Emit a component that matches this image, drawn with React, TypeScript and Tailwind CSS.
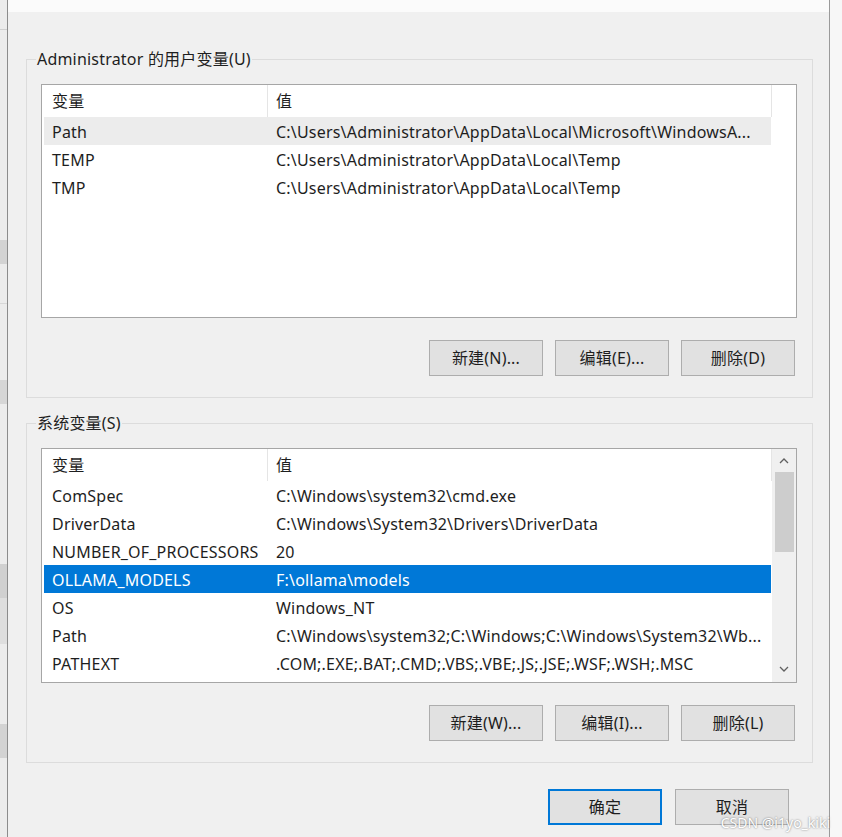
import React from "react";

const userVars: [string, string][] = [
  ["Path", "C:\\Users\\Administrator\\AppData\\Local\\Microsoft\\WindowsA..."],
  ["TEMP", "C:\\Users\\Administrator\\AppData\\Local\\Temp"],
  ["TMP", "C:\\Users\\Administrator\\AppData\\Local\\Temp"],
];

const systemVars: [string, string][] = [
  ["ComSpec", "C:\\Windows\\system32\\cmd.exe"],
  ["DriverData", "C:\\Windows\\System32\\Drivers\\DriverData"],
  ["NUMBER_OF_PROCESSORS", "20"],
  ["OLLAMA_MODELS", "F:\\ollama\\models"],
  ["OS", "Windows_NT"],
  ["Path", "C:\\Windows\\system32;C:\\Windows;C:\\Windows\\System32\\Wb..."],
  ["PATHEXT", ".COM;.EXE;.BAT;.CMD;.VBS;.VBE;.JS;.JSE;.WSF;.WSH;.MSC"],
];

function Header() {
  return (
    <div className="flex h-[32px] shrink-0 items-center">
      <div className="flex h-full w-[226px] items-center border-r border-[#e5e5e5] pl-[10px]">变量</div>
      <div className="flex h-full w-[504px] items-center border-r border-[#e5e5e5] pl-[8px]">值</div>
    </div>
  );
}

function Row({ name, value, tone }: { name: string; value: string; tone?: "focus" | "soft" }) {
  const bg = tone === "focus" ? "bg-[#0078d7] text-white" : tone === "soft" ? "bg-[#ececec]" : "";
  return (
    <div className={`mx-[2px] flex h-[28px] w-[727px] items-center pt-[1px] ${bg}`}>
      <div className="w-[224px] shrink-0 whitespace-nowrap pl-[8px]">{name}</div>
      <div className="min-w-0 flex-1 overflow-hidden whitespace-nowrap pl-[8px]">{value}</div>
    </div>
  );
}

function Chevron({ up }: { up?: boolean }) {
  return (
    <svg width="10" height="6" viewBox="0 0 10 6" className="text-[#606060]">
      <polyline
        points={up ? "1,5 5,1 9,5" : "1,1 5,5 9,1"}
        fill="none"
        stroke="currentColor"
        strokeWidth="1.3"
      />
    </svg>
  );
}

function Btn({ children, primary }: { children: React.ReactNode; primary?: boolean }) {
  return (
    <div
      className={`flex h-[36px] w-[114px] items-center justify-center bg-[#e1e1e1] ${
        primary ? "border-2 border-[#0078d7]" : "border border-[#adadad]"
      }`}
    >
      {children}
    </div>
  );
}

function Group({ title, children }: { title: string; children: React.ReactNode }) {
  return (
    <fieldset className="w-[787px] border border-[#dcdcdc] pl-[14px] pr-[15px] pb-[21px]">
      <legend className="ml-[-5px] px-[1px] leading-[20px]">{title}</legend>
      {children}
    </fieldset>
  );
}

export default function App() {
  return (
    <div className="relative flex h-[837px] w-[842px] overflow-hidden bg-[#f0f0f0] font-['Noto_Sans','Noto_Sans_CJK_SC',sans-serif] text-[16px] tracking-[0.2px] text-[#1e1e1e]">
      {/* window behind, left edge */}
      <div className="flex w-[8px] shrink-0 flex-col border-r border-[#8c8c8c] bg-[#ececec]">
        <div className="h-[30px] border-b border-[#d0d0d0]" />
        <div className="h-[210px]" />
        <div className="h-[24px] bg-[#d3d3d3]" />
        <div className="h-[40px] border-b border-[#d8d8d8]" />
        <div className="h-[76px]" />
        <div className="h-[24px] bg-[#d6d6d6]" />
        <div className="h-[160px]" />
        <div className="h-[34px] bg-[#d0d0d0]" />
        <div className="h-[46px] bg-[#dedede]" />
        <div className="h-[80px]" />
        <div className="h-[34px] bg-[#d3d3d3]" />
      </div>

      {/* dialog */}
      <div className="flex w-[822px] shrink-0 flex-col border-r border-[#9a9a9a]">
        <div className="h-[12px] shrink-0 bg-[#fbfbfb]" />
        <div className="flex flex-col pl-[18px] pt-[37px]">
          <Group title="Administrator 的用户变量(U)">
            <div className="mt-[15px] flex h-[234px] w-[756px] flex-col border border-[#a6a6a6] bg-white">
              <Header />
              {userVars.map(([n, v], i) => (
                <Row key={n} name={n} value={v} tone={i === 0 ? "soft" : undefined} />
              ))}
            </div>
            <div className="mt-[22px] flex justify-end gap-[12px] pr-[2px]">
              <Btn>新建(N)...</Btn>
              <Btn>编辑(E)...</Btn>
              <Btn>删除(D)</Btn>
            </div>
          </Group>

          <div className="mt-[15px]">
            <Group title="系统变量(S)">
              <div className="mt-[15px] flex h-[235px] w-[756px] border border-[#a6a6a6] bg-white">
                <div className="flex w-[730px] flex-col">
                  <Header />
                  {systemVars.map(([n, v]) => (
                    <Row key={n} name={n} value={v} tone={n === "OLLAMA_MODELS" ? "focus" : undefined} />
                  ))}
                </div>
                <div className="flex w-[24px] flex-col items-center bg-[#f0f0f0]">
                  <div className="flex h-[23px] items-center justify-center">
                    <Chevron up />
                  </div>
                  <div className="h-[80px] w-[19px] bg-[#cdcdcd]" />
                  <div className="flex-1" />
                  <div className="flex h-[26px] items-center justify-center">
                    <Chevron />
                  </div>
                </div>
              </div>
              <div className="mt-[22px] flex justify-end gap-[12px] pr-[2px]">
                <Btn>新建(W)...</Btn>
                <Btn>编辑(I)...</Btn>
                <Btn>删除(L)</Btn>
              </div>
            </Group>
          </div>
        </div>

        <div className="mt-[26px] flex justify-end gap-[13px] pr-[40px]">
          <Btn primary>确定</Btn>
          <Btn>取消</Btn>
        </div>
      </div>

      <div className="flex-1 bg-[#f7f7f7]" />

      <div className="absolute bottom-[7px] right-[12px] text-[14px] leading-[15px] tracking-normal text-white [text-shadow:0_0_2px_rgba(0,0,0,0.55)]">
        CSDN @i1yo_kiki
      </div>
    </div>
  );
}
